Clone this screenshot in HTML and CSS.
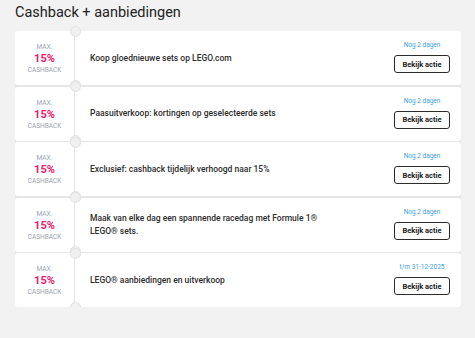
FILE: index.html
```html
<!DOCTYPE html>
<html lang="nl">
<head>
    <meta charset="UTF-8">
    <meta name="viewport" content="width=device-width, initial-scale=1.0">
    <title>Cashback + aanbiedingen</title>
    <link rel="stylesheet" href="styles.css">
</head>
<body>
    <h2 class="title">Cashback + aanbiedingen</h2>
    <div class="offers">
        <div class="offer">
            <div class="rate">
                <span class="rate-max">Max.</span>
                <span class="rate-value">15%</span>
                <span class="rate-label">Cashback</span>
            </div>
            <div class="offer-text">Koop gloednieuwe sets op LEGO.com</div>
            <div class="offer-action">
                <span class="deadline">Nog 2 dagen</span>
                <button class="actionbutton">Bekijk actie</button>
            </div>
        </div>
        <div class="offer">
            <div class="rate">
                <span class="rate-max">Max.</span>
                <span class="rate-value">15%</span>
                <span class="rate-label">Cashback</span>
            </div>
            <div class="offer-text">Paasuitverkoop: kortingen op geselecteerde sets</div>
            <div class="offer-action">
                <span class="deadline">Nog 2 dagen</span>
                <button class="actionbutton">Bekijk actie</button>
            </div>
        </div>
        <div class="offer">
            <div class="rate">
                <span class="rate-max">Max.</span>
                <span class="rate-value">15%</span>
                <span class="rate-label">Cashback</span>
            </div>
            <div class="offer-text">Exclusief: cashback tijdelijk verhoogd naar 15%</div>
            <div class="offer-action">
                <span class="deadline">Nog 2 dagen</span>
                <button class="actionbutton">Bekijk actie</button>
            </div>
        </div>
        <div class="offer">
            <div class="rate">
                <span class="rate-max">Max.</span>
                <span class="rate-value">15%</span>
                <span class="rate-label">Cashback</span>
            </div>
            <div class="offer-text">Maak van elke dag een spannende racedag met Formule 1® LEGO® sets.</div>
            <div class="offer-action">
                <span class="deadline">Nog 2 dagen</span>
                <button class="actionbutton">Bekijk actie</button>
            </div>
        </div>
        <div class="offer">
            <div class="rate">
                <span class="rate-max">Max.</span>
                <span class="rate-value">15%</span>
                <span class="rate-label">Cashback</span>
            </div>
            <div class="offer-text">LEGO® aanbiedingen en uitverkoop</div>
            <div class="offer-action">
                <span class="deadline">t/m 31-12-2025</span>
                <button class="actionbutton">Bekijk actie</button>
            </div>
        </div>
    </div>
</body>
</html>
```

FILE: styles.css
```css
body {
    font-family: Roboto, "Liberation Sans", sans-serif;
    margin: 0;
    padding: 0 14px 0 15px;
    background: #f2f2f2;
    color: #2b2b2b;
}
.title {
    margin: 4px 0 9px;
    font-size: 14.5px;
    line-height: 18px;
    font-weight: 400;
    color: #222;
}
.offers {
    display: flex;
    flex-direction: column;
    gap: 1.5px;
    background: #e6e6e6;
    border-radius: 3px;
}
.offer {
    position: relative;
    display: grid;
    grid-template-columns: 60px 1fr 56px;
    height: 54px;
    background: white;
    border-radius: 3px;
}
/* halve cirkels boven en onder de scheidingslijn */
.offer::before, .offer::after {
    content: "";
    position: absolute;
    left: 55px;
    width: 9px;
    height: 9px;
    border-radius: 50%;
    background: #f0f0f0;
    border: 1px solid #e2e2e2;
}
.offer::before {
    top: -5.5px;
}
.offer::after {
    bottom: -5.5px;
}
.rate {
    display: flex;
    flex-direction: column;
    align-items: center;
    justify-content: center;
    border-right: 1px solid #e6e6e6;
    padding-top: 1px;
}
.rate-max, .rate-label {
    font-size: 6.5px;
    line-height: 8px;
    color: #9aa3ae;
    text-transform: uppercase;
}
.rate-value {
    font-size: 11px;
    line-height: 15px;
    font-weight: 700;
    color: #ec1a6b;
}
.offer-text {
    display: flex;
    align-items: center;
    padding: 0 62px 0 15px;
    font-size: 8.5px;
    line-height: 12.5px;
    font-weight: 500;
    color: #2d2d2d;
}
.offer-action {
    display: flex;
    flex-direction: column;
    align-items: center;
    padding-top: 10px;
    margin-right: 22px;
}
.deadline {
    font-size: 6.5px;
    line-height: 9px;
    color: #3a9fe0;
    white-space: nowrap;
    margin-bottom: 5px;
}
.actionbutton {
    width: 56px;
    height: 18px;
    padding: 0;
    font-family: Roboto, "Liberation Sans", sans-serif;
    font-size: 7.5px;
    font-weight: 700;
    color: #222;
    background: white;
    border: 1.5px solid #2b2b2b;
    border-radius: 3px;
    cursor: pointer;
}
```
